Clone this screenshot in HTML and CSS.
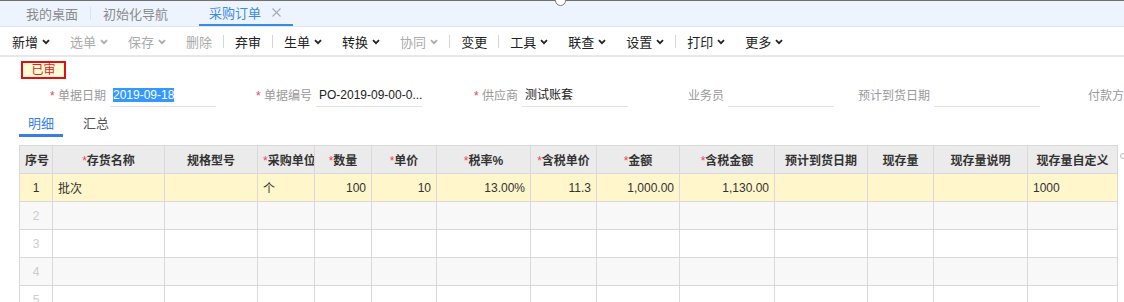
FILE: index.html
```html
<!DOCTYPE html>
<html lang="zh-CN">
<head>
  <meta charset="UTF-8" />
  <meta name="viewport" content="width=device-width, initial-scale=1" />
  <title>采购订单</title>
  <link rel="stylesheet" href="styles.css">
</head>
<body>
  <div class="tabbar">
    <span class="tab">我的桌面</span>
    <span class="tab-sep"></span>
    <span class="tab">初始化导航</span>
    <span class="tab active">采购订单
      <svg class="tab-close" width="9" height="9" viewBox="0 0 9 9"><path d="M0.5 0.5L8.5 8.5M8.5 0.5L0.5 8.5" stroke="#aab" stroke-width="1.2"/></svg>
    </span>
    <span class="drag-handle"></span>
  </div>

  <div class="toolbar">
    <span class="tool">新增<svg class="caret" width="8" height="6" viewBox="0 0 8 6"><path d="M1 1.2L4 4.2L7 1.2" fill="none" stroke="currentColor" stroke-width="1.8"/></svg></span>
    <span class="tool off">选单<svg class="caret" width="8" height="6" viewBox="0 0 8 6"><path d="M1 1.2L4 4.2L7 1.2" fill="none" stroke="currentColor" stroke-width="1.8"/></svg></span>
    <span class="tool off">保存<svg class="caret" width="8" height="6" viewBox="0 0 8 6"><path d="M1 1.2L4 4.2L7 1.2" fill="none" stroke="currentColor" stroke-width="1.8"/></svg></span>
    <span class="tool off">删除</span>
    <span class="tool-sep"></span>
    <span class="tool">弃审</span>
    <span class="tool-sep"></span>
    <span class="tool">生单<svg class="caret" width="8" height="6" viewBox="0 0 8 6"><path d="M1 1.2L4 4.2L7 1.2" fill="none" stroke="currentColor" stroke-width="1.8"/></svg></span>
    <span class="tool">转换<svg class="caret" width="8" height="6" viewBox="0 0 8 6"><path d="M1 1.2L4 4.2L7 1.2" fill="none" stroke="currentColor" stroke-width="1.8"/></svg></span>
    <span class="tool off">协同<svg class="caret" width="8" height="6" viewBox="0 0 8 6"><path d="M1 1.2L4 4.2L7 1.2" fill="none" stroke="currentColor" stroke-width="1.8"/></svg></span>
    <span class="tool-sep"></span>
    <span class="tool">变更</span>
    <span class="tool-sep"></span>
    <span class="tool">工具<svg class="caret" width="8" height="6" viewBox="0 0 8 6"><path d="M1 1.2L4 4.2L7 1.2" fill="none" stroke="currentColor" stroke-width="1.8"/></svg></span>
    <span class="tool">联查<svg class="caret" width="8" height="6" viewBox="0 0 8 6"><path d="M1 1.2L4 4.2L7 1.2" fill="none" stroke="currentColor" stroke-width="1.8"/></svg></span>
    <span class="tool">设置<svg class="caret" width="8" height="6" viewBox="0 0 8 6"><path d="M1 1.2L4 4.2L7 1.2" fill="none" stroke="currentColor" stroke-width="1.8"/></svg></span>
    <span class="tool-sep"></span>
    <span class="tool">打印<svg class="caret" width="8" height="6" viewBox="0 0 8 6"><path d="M1 1.2L4 4.2L7 1.2" fill="none" stroke="currentColor" stroke-width="1.8"/></svg></span>
    <span class="tool">更多<svg class="caret" width="8" height="6" viewBox="0 0 8 6"><path d="M1 1.2L4 4.2L7 1.2" fill="none" stroke="currentColor" stroke-width="1.8"/></svg></span>
  </div>

  <div class="bill">
    <div class="status">已审</div>

    <div class="head-fields">
      <div class="field">
        <label><span class="req">*</span> 单据日期</label>
        <div class="value"><span class="selected">2019-09-18</span></div>
      </div>
      <div class="field">
        <label><span class="req">*</span> 单据编号</label>
        <div class="value">PO-2019-09-00-0...</div>
      </div>
      <div class="field">
        <label><span class="req">*</span> 供应商</label>
        <div class="value">测试账套</div>
      </div>
      <div class="field">
        <label>业务员</label>
        <div class="value"></div>
      </div>
      <div class="field">
        <label>预计到货日期</label>
        <div class="value"></div>
      </div>
      <div class="field">
        <label>付款方式</label>
        <div class="value"></div>
      </div>
    </div>

    <div class="sub-tabs">
      <span class="sub-tab active">明细</span>
      <span class="sub-tab">汇总</span>
    </div>

    <div class="grid-wrap">
      <table class="grid">
        <colgroup>
          <col style="width:33px"><col style="width:112px"><col style="width:93px"><col style="width:57px">
          <col style="width:57px"><col style="width:65px"><col style="width:94px"><col style="width:66px">
          <col style="width:83px"><col style="width:95px"><col style="width:93px"><col style="width:66px">
          <col style="width:94px"><col style="width:90px">
        </colgroup>
        <thead>
          <tr>
            <th>序号</th>
            <th><span class="req">*</span>存货名称</th>
            <th>规格型号</th>
            <th><span class="req">*</span>采购单位</th>
            <th><span class="req">*</span>数量</th>
            <th><span class="req">*</span>单价</th>
            <th><span class="req">*</span>税率%</th>
            <th><span class="req">*</span>含税单价</th>
            <th><span class="req">*</span>金额</th>
            <th><span class="req">*</span>含税金额</th>
            <th>预计到货日期</th>
            <th>现存量</th>
            <th>现存量说明</th>
            <th>现存量自定义</th>
          </tr>
        </thead>
        <tbody>
          <tr class="current">
            <td class="no">1</td><td>批次</td><td></td><td>个</td>
            <td class="num">100</td><td class="num">10</td><td class="num">13.00%</td><td class="num">11.3</td>
            <td class="num">1,000.00</td><td class="num">1,130.00</td><td></td><td></td><td></td><td>1000</td>
          </tr>
          <tr class="alt">
            <td class="no">2</td><td></td><td></td><td></td><td></td><td></td><td></td><td></td><td></td><td></td><td></td><td></td><td></td><td></td>
          </tr>
          <tr>
            <td class="no">3</td><td></td><td></td><td></td><td></td><td></td><td></td><td></td><td></td><td></td><td></td><td></td><td></td><td></td>
          </tr>
          <tr class="alt">
            <td class="no">4</td><td></td><td></td><td></td><td></td><td></td><td></td><td></td><td></td><td></td><td></td><td></td><td></td><td></td>
          </tr>
          <tr>
            <td class="no">5</td><td></td><td></td><td></td><td></td><td></td><td></td><td></td><td></td><td></td><td></td><td></td><td></td><td></td>
          </tr>
        </tbody>
      </table>
      <span class="col-setting"></span>
    </div>
  </div>
</body>
</html>
```

FILE: styles.css
```css
* {
  box-sizing: border-box;
  margin: 0;
  padding: 0;
}

body {
  font-family: "Liberation Sans", "Noto Sans CJK SC", sans-serif;
  font-size: 12px;
  color: #333;
  background: #fff;
  overflow: hidden;
}

/* top tab bar */
.tabbar {
  position: relative;
  display: flex;
  align-items: stretch;
  height: 27px;
  padding-left: 14px;
  background-color: #eef4fd;
  border-top: 1px solid #6f6f6f;
  border-bottom: 1px solid #dde5f0;
  font-size: 13px;
}

.tab {
  display: flex;
  align-items: center;
  padding: 0 12px;
  color: #8a8a8a;
}

.tab-sep {
  width: 1px;
  margin: 6px 0;
  background-color: #dde3ec;
}

.tab.active {
  margin-left: 19px;
  padding: 0 12px 0 10px;
  color: #3a8be6;
  border-bottom: 2px solid #3a8be6;
  gap: 11px;
}

.tab-close {
  display: block;
}

.drag-handle {
  position: absolute;
  left: 555px;
  top: -6px;
  width: 11px;
  height: 11px;
  border-radius: 50%;
  background-color: #fff;
  border: 1px solid #777;
}

/* toolbar */
.toolbar {
  display: flex;
  align-items: center;
  height: 30px;
  padding-left: 2px;
  border-bottom: 2px solid #e8e8e8;
  font-size: 13px;
}

.tool {
  display: flex;
  align-items: center;
  gap: 4px;
  padding: 0 10px;
  color: #222;
}

.tool.off {
  color: #aaa;
}

.caret {
  display: block;
  margin-top: 1px;
}

.tool-sep {
  width: 1px;
  height: 13px;
  margin: 0 1px;
  background-color: #d6d6d6;
}

/* bill head */
.status {
  width: 45px;
  height: 18px;
  margin: 4px 0 0 21px;
  border: 2px solid #dd1111;
  background-color: #fffbd6;
  color: #e02020;
  font-size: 12px;
  line-height: 14px;
  text-align: center;
}

.head-fields {
  display: flex;
  margin-top: 5px;
  padding-left: 10px;
}

.field {
  display: flex;
  align-items: flex-end;
  flex: 0 0 206px;
  gap: 4px;
}

.field label {
  flex: 0 0 96px;
  text-align: right;
  color: #999;
  font-size: 12px;
  line-height: 22px;
  white-space: nowrap;
}

.req {
  color: #f0405a;
}

.field .value {
  flex: 0 0 106px;
  height: 23px;
  padding: 0 3px;
  border-bottom: 1px solid #e2e2e2;
  font-size: 12px;
  line-height: 22px;
  color: #222;
  white-space: nowrap;
  overflow: hidden;
}

.selected {
  background-color: #3399ff;
  color: #fff;
}

/* detail tabs */
.sub-tabs {
  display: flex;
  gap: 11px;
  margin: 4px 0 0 19px;
}

.sub-tab {
  width: 44px;
  padding-top: 3px;
  text-align: center;
  font-size: 13px;
  line-height: 20px;
  color: #555;
  border-bottom: 3px solid transparent;
}

.sub-tab.active {
  color: #3a7fe0;
  border-bottom-color: #3a7fe0;
}

/* grid */
.grid-wrap {
  position: relative;
  margin: 8px 0 0 19px;
}

.grid {
  width: 1098px;
  table-layout: fixed;
  border-collapse: collapse;
}

.grid th,
.grid td {
  height: 28px;
  padding: 0 5px;
  border: 1px solid #d9d9d9;
  font-size: 12px;
  white-space: nowrap;
  overflow: hidden;
}

.grid th {
  background-color: #ebebeb;
  font-weight: bold;
  color: #333;
  text-align: center;
}

.grid th .req {
  font-weight: normal;
}

.grid td {
  color: #333;
}

.grid td.no {
  text-align: center;
  color: #ccc;
}

.grid td.num {
  text-align: right;
}

.grid tr.current td {
  background-color: #fff6cc;
}

.grid tr.current td.no {
  color: #333;
}

.grid tr.alt td {
  background-color: #f8f8f8;
}

.col-setting {
  position: absolute;
  left: 1101px;
  top: 8px;
  width: 6px;
  height: 6px;
  border-radius: 50%;
  border: 1px solid #bbb;
}
```
